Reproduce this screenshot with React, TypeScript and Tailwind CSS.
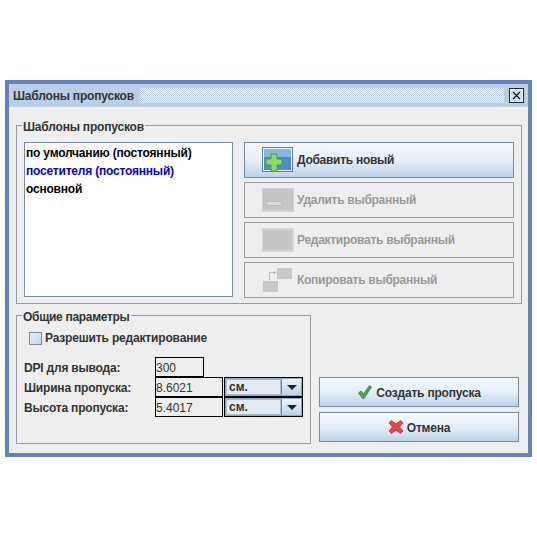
const FONT = "font-['Liberation_Sans',Arial,sans-serif]";

const BTN_ACTIVE = 'border border-[#7a8a99] bg-gradient-to-b from-[#f4f8fb] via-[#e6eff7] to-[#bcd2e6] text-[#333333]';
const BTN_OFF = 'border border-[#999999] bg-[#eeeeee] text-[#999999]';

function AddIcon() {
  return (
    <svg width="32" height="26" viewBox="0 0 32 26">
      <rect x="0.5" y="0.5" width="30" height="24" fill="#f2f6fa" stroke="#5f7f9f" />
      <rect x="2" y="2" width="27" height="21" fill="#4f8ad0" />
      <rect x="2" y="2" width="27" height="8" fill="#8ab6e6" />
      <path d="M9 7h6v5h5v6h-5v6H9v-6H4v-6h5z" fill="#90d860" stroke="#4f9a30" />
    </svg>
  );
}

function DeleteIcon() {
  return (
    <svg width="32" height="24" viewBox="0 0 32 24">
      <rect width="32" height="24" fill="#d2d2d2" />
      <rect x="1" y="1" width="30" height="21" fill="#c6c6c6" />
      <rect x="4.5" y="13.5" width="15" height="4" fill="#dadada" stroke="#bdbdbd" />
    </svg>
  );
}

function EditIcon() {
  return (
    <svg width="32" height="24" viewBox="0 0 32 24">
      <rect width="32" height="24" fill="#d4d4d4" />
      <rect x="1" y="2" width="29" height="20" fill="#c6c6c6" />
    </svg>
  );
}

function CopyIcon() {
  return (
    <svg width="32" height="25" viewBox="0 0 32 25">
      <rect x="15" y="0" width="15" height="11" fill="#c8c8c8" />
      <rect x="1" y="13" width="15" height="11" fill="#c8c8c8" />
      <path d="M7.5 12V4.5H13" fill="none" stroke="#bbbbbb" />
      <path d="M12 3l2 1.5-2 1.5z" fill="#aaaaaa" />
    </svg>
  );
}

function CheckIcon() {
  return (
    <svg width="16" height="16" viewBox="0 0 16 16">
      <path d="M1.5 9l2.5-2 2.5 3L12.5 1.5l2 1.5L7 14.5H5.5z" fill="#52a050" stroke="#5f7f68" strokeWidth="1" />
    </svg>
  );
}

function CrossIcon() {
  return (
    <svg width="16" height="14" viewBox="0 0 16 14">
      <path d="M1 3l2.5-2.5L8 4l4.5-3.5L15 3l-3.5 4 3.5 4-2.5 2.5L8 10l-4.5 3.5L1 11l3.5-4z" fill="#e84848" stroke="#b03030" strokeWidth="0.8" />
    </svg>
  );
}

function ActionButton({ icon, label, disabled }: { icon: React.ReactNode; label: string; disabled?: boolean }) {
  return (
    <button className={`flex items-center h-[36px] pl-[17px] ${disabled ? BTN_OFF : BTN_ACTIVE}`}>
      <span className="w-[32px] flex justify-center">{icon}</span>
      <span className="ml-[3px] tracking-[-0.28px]">{label}</span>
    </button>
  );
}

function Field({ value, width }: { value: string; width: string }) {
  return (
    <div className={`${width} h-[20px] border border-black leading-[20px] font-normal text-[#333333]`}>
      {value}
    </div>
  );
}

function UnitSelect() {
  return (
    <div className="w-[79px] h-[20px] ml-[1px] border border-black bg-[#8fa8c0] p-[1px] flex">
      <div className="flex-1 border border-[#a8bccf] bg-[#e4ebf2] leading-[14px] pl-[2px] text-[#333333]">см.</div>
      <div className="w-[20px] bg-gradient-to-b from-[#f0f5fa] to-[#bcd2e6] border-l border-[#7a8a99] flex items-center justify-center">
        <div className="w-0 h-0 border-l-[5px] border-r-[5px] border-t-[5px] border-l-transparent border-r-transparent border-t-[#222222]" />
      </div>
    </div>
  );
}

function ParamRow({ label, value }: { label: string; value: string }) {
  return (
    <div className="flex items-center">
      <span className="w-[131px] pt-[2px] tracking-[-0.2px] text-[#333333]">{label}</span>
      <Field value={value} width="w-[68px]" />
      <UnitSelect />
    </div>
  );
}

export default function App() {
  return (
    <div className={`w-[537px] h-[537px] bg-white pt-[80px] pl-[5px] text-[12px] font-bold ${FONT}`}>
      <div className="w-[527px] h-[377px] border-4 border-[#6382bf] bg-[#eeeeee] flex flex-col">
        {/* Title bar */}
        <div className="h-[23px] bg-[#b8cfe5] flex items-center pl-[4px] pr-[4px] text-[#333333]">
          <span className="mr-[6px] tracking-[-0.2px]">Шаблоны пропусков</span>
          <div className="flex-1 h-[15px] bg-[conic-gradient(#f0f5fa_25%,transparent_0_50%,#f0f5fa_0_75%,transparent_0)] bg-[length:2px_2px]" />
          <div className="ml-[5px] w-[15px] h-[15px] border border-[#1a2530] bg-[#d4e2ef] outline outline-[1px] outline-offset-[-2px] outline-white flex items-center justify-center">
            <svg width="11" height="11" viewBox="0 0 11 11">
              <path d="M2 2l7 7M9 2l-7 7" stroke="#111111" strokeWidth="1.1" />
            </svg>
          </div>
        </div>

        <div className="flex-1 px-[7px] pt-[18px]">
          {/* Templates group */}
          <div className="relative w-[506px] h-[179px] border border-[#999999] pl-[7px] pt-[16px] pr-[7px] flex gap-[11px]">
            <span className="absolute left-[5px] top-[-5px] bg-[#eeeeee] px-[1px] leading-[13px] tracking-[-0.2px] text-[#333333]">Шаблоны пропусков</span>
            <div className="w-[209px] h-[155px] border border-[#7a8a99] bg-white pl-[1px] pt-[1px] leading-[18px] tracking-[-0.2px]">
              <div className="text-black">по умолчанию (постоянный)</div>
              <div className="text-[#0000e0]">посетителя (постоянный)</div>
              <div className="text-black">основной</div>
            </div>
            <div className="w-[270px] flex flex-col gap-[4px]">
              <ActionButton icon={<AddIcon />} label="Добавить новый" />
              <ActionButton icon={<DeleteIcon />} label="Удалить выбранный" disabled />
              <ActionButton icon={<EditIcon />} label="Редактировать выбранный" disabled />
              <ActionButton icon={<CopyIcon />} label="Копировать выбранный" disabled />
            </div>
          </div>

          <div className="flex mt-[11px]">
            {/* General params group */}
            <div className="relative w-[295px] h-[129px] border border-[#999999] pl-[7px] pt-[13px]">
              <span className="absolute left-[5px] top-[-5px] bg-[#eeeeee] px-[1px] leading-[13px] tracking-[-0.3px] text-[#333333]">Общие параметры</span>
              <div className="flex items-center pl-[5px] text-[#333333]">
                <div className="w-[13px] h-[13px] border border-[#7a8a99] bg-gradient-to-br from-[#e8eff6] to-[#c4d6e8]" />
                <span className="ml-[3px] tracking-[-0.17px]">Разрешить редактирование</span>
              </div>
              <div className="mt-[10px] flex items-center">
                <span className="w-[131px] pt-[2px] tracking-[-0.2px] text-[#333333]">DPI для вывода:</span>
                <Field value="300" width="w-[49px]" />
              </div>
              <ParamRow label="Ширина пропуска:" value="8.6021" />
              <ParamRow label="Высота пропуска:" value="5.4017" />
            </div>

            <div className="ml-[8px] w-[200px] flex flex-col gap-[5px] pt-[62px]">
              <button className={`h-[30px] flex items-center justify-center gap-[3px] ${BTN_ACTIVE}`}>
                <CheckIcon />
                <span className="tracking-[-0.2px] pt-[1px]">Создать пропуска</span>
              </button>
              <button className={`h-[30px] flex items-center justify-center gap-[3px] ${BTN_ACTIVE}`}>
                <CrossIcon />
                <span className="tracking-[-0.2px] pt-[1px]">Отмена</span>
              </button>
            </div>
          </div>
        </div>
      </div>
    </div>
  );
}
